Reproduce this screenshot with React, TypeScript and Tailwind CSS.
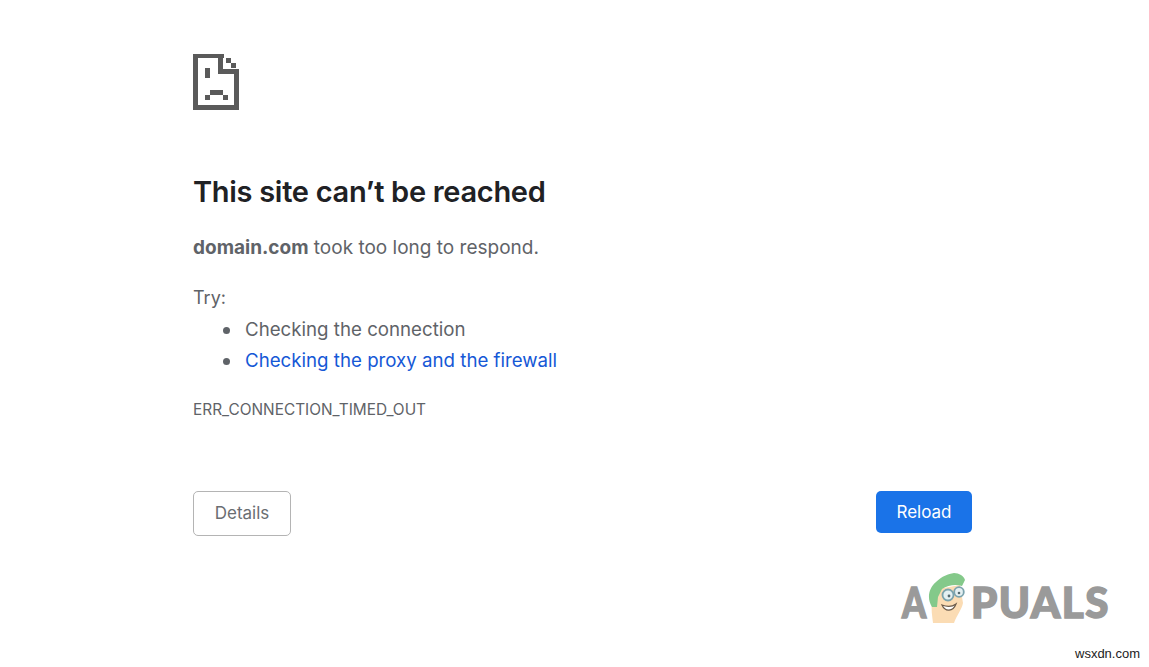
function SadPage() {
  return (
    <svg width="47" height="56" viewBox="0 0 47 56" className="block">
      <g fill="#5a5a5a">
        <path d="M0 0H31V4H5V51H41V15H46V56H0Z" />
        <path d="M25 0H30V15H46V20H25Z" />
        <rect x="33" y="4" width="5" height="5" />
        <rect x="38" y="9" width="5" height="5" />
        <rect x="12" y="14" width="5" height="10" />
        <rect x="12" y="41" width="5" height="5" />
        <rect x="17" y="36" width="13" height="5" />
        <rect x="30" y="41" width="5" height="5" />
      </g>
    </svg>
  );
}

function Mascot() {
  return (
    <svg width="38" height="50" viewBox="0 0 38 50" className="block">
      <path d="M5 50C4 42 3 36 4 30L10 16L32 12L35 30C34 36 29 42 26 50Z" fill="#fbdcb4" />
      <path d="M4 34C-1 26 0 16 8 9C14 3 20 1 26 0C31 0 36 3 37 7L34 13C28 11 20 12 14 16L10 24L9 34Z" fill="#84c98a" />
      <circle cx="20" cy="22" r="5.5" fill="#e4f0f2" stroke="#7ba3ad" strokeWidth="1.8" />
      <circle cx="31" cy="19" r="4.8" fill="#e4f0f2" stroke="#7ba3ad" strokeWidth="1.8" />
      <circle cx="21" cy="23" r="1.4" fill="#55696e" />
      <circle cx="31" cy="20" r="1.3" fill="#55696e" />
      <path d="M14 32C17 39 25 39 28 31C24 34 19 34 14 32Z" fill="#fff" stroke="#6b5a4a" strokeWidth="1.2" />
    </svg>
  );
}

export default function App() {
  return (
    <div className="relative h-[667px] w-[1149px] overflow-hidden bg-white font-['Inter','Liberation_Sans',sans-serif] text-[#5f6368]">
      <div className="ml-[193px] flex w-[779px] flex-col pt-[54px]">
        <SadPage />
        <h1 className="mt-[64px] text-[29px] leading-[36px] font-semibold tracking-[-0.3px] text-[#202124]">
          This site can’t be reached
        </h1>
        <p className="mt-[25px] text-[19px] leading-[26px]">
          <span className="font-bold">domain.com</span> took too long to respond.
        </p>
        <p className="mt-[24px] text-[18px] leading-[26px]">Try:</p>
        <ul className="mt-[6px] flex flex-col gap-[5px] pl-[52px] text-[18.7px] leading-[26px]">
          <li className="relative">
            <span className="absolute top-[10px] -left-[22px] h-[7px] w-[7px] rounded-full bg-[#5f6368]" />
            Checking the connection
          </li>
          <li className="relative text-[#1558d6]">
            <span className="absolute top-[10px] -left-[22px] h-[7px] w-[7px] rounded-full bg-[#5f6368]" />
            Checking the proxy and the firewall
          </li>
        </ul>
        <p className="mt-[26px] text-[15.4px] leading-[20px]">ERR_CONNECTION_TIMED_OUT</p>
        <div className="mt-[71px] flex items-start justify-between">
          <button className="h-[45px] w-[98px] rounded-[5px] border border-[#b4b4b4] bg-white pt-[1px] text-[17px] text-[#6a6e72]">
            Details
          </button>
          <button className="h-[42px] w-[96px] rounded-[5px] bg-[#1a73e8] pt-[2px] text-[17px] text-white">
            Reload
          </button>
        </div>
      </div>

      <div className="absolute top-[573px] left-[902px] flex h-[50px] items-end font-['Lato',sans-serif] text-[42px] leading-[42px] font-black tracking-[1.5px] text-[#9a9a9a] [-webkit-text-stroke:1.5px_#9a9a9a]">
        <span className="inline-block w-[26px] origin-left scale-x-[0.82]">A</span>
        <span className="relative"><Mascot /></span>
        <span className="ml-[5px]">PUALS</span>
      </div>
      <span className="absolute top-[646px] left-[1075px] font-['Liberation_Sans',sans-serif] text-[13px] leading-[16px] text-[#222]">
        wsxdn.com
      </span>
    </div>
  );
}
